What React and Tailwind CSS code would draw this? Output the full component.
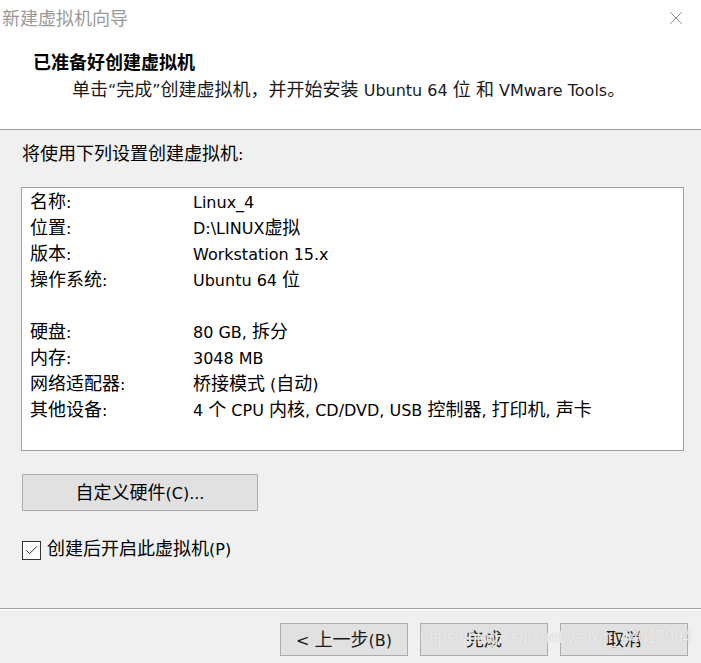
import { Check, X } from 'lucide-react';

const rows = [
  ['名称:', 'Linux_4'],
  ['位置:', 'D:\\LINUX虚拟'],
  ['版本:', 'Workstation 15.x'],
  ['操作系统:', 'Ubuntu 64 位'],
  null,
  ['硬盘:', '80 GB, 拆分'],
  ['内存:', '3048 MB'],
  ['网络适配器:', '桥接模式 (自动)'],
  ['其他设备:', '4 个 CPU 内核, CD/DVD, USB 控制器, 打印机, 声卡'],
];

const font = { fontFamily: '"DejaVu Sans", "Noto Sans CJK SC", sans-serif' };

// Han runs render a little larger than the Latin text beside them
function T({ children }) {
  const parts = String(children).split(/([\u3000-\u303f\u4e00-\u9fff\uff00-\uffef]+)/);
  return parts.map((p, i) =>
    i % 2 ? (
      <span key={i} className="text-[18px] leading-none">
        {p}
      </span>
    ) : (
      p
    )
  );
}

function DlgButton({ children }) {
  return (
    <button className="h-[33px] w-[128px] border border-[#adadad] bg-[#e1e1e1] text-[16px] leading-none text-[#1a1a1a]">
      <T>{children}</T>
    </button>
  );
}

export default function App() {
  return (
    <div className="relative h-[663px] w-[701px] overflow-hidden bg-[#f0f0f0] text-[16px] text-black" style={font}>
      {/* header */}
      <div className="h-[129px] bg-white">
        <div className="flex h-[36px] items-center justify-between pl-[2px] pr-[14px]">
          <span className="text-[18px] text-[#999999]">新建虚拟机向导</span>
          <X className="h-[22px] w-[22px] text-[#888888]" strokeWidth={1} />
        </div>
        <div className="pl-[33px] pt-[15px] text-[18px] font-bold leading-[24px]">已准备好创建虚拟机</div>
        <div className="pl-[72px] pt-[4px] leading-[24px] text-[#1a1a1a]">
          <T>单击“完成”创建虚拟机，并开始安装 Ubuntu 64 位 和 VMware Tools。</T>
        </div>
      </div>
      <div className="h-px bg-[#a0a0a0]" />

      <div className="px-[21px]">
        <div className="pl-px pt-[13px] leading-[24px]">
          <T>将使用下列设置创建虚拟机:</T>
        </div>
        <div className="mt-[20px] h-[264px] w-[663px] border border-[#a0a0a0] bg-white pl-[8px] pt-[2px]">
          {rows.map((r, i) =>
            r ? (
              <div key={i} className="flex h-[26px] items-center">
                <span className="w-[163px] shrink-0">
                  <T>{r[0]}</T>
                </span>
                <span>
                  <T>{r[1]}</T>
                </span>
              </div>
            ) : (
              <div key={i} className="h-[26px]" />
            )
          )}
        </div>

        <button className="ml-px mt-[23px] h-[37px] w-[236px] border border-[#adadad] bg-[#e1e1e1] leading-none">
          <T>自定义硬件(C)...</T>
        </button>

        <label className="ml-px mt-[27px] flex items-center gap-[6px]">
          <span className="flex h-[19px] w-[19px] items-center justify-center border border-[#333333] bg-white">
            <Check className="h-[15px] w-[15px] text-[#222222]" strokeWidth={1.5} />
          </span>
          <span className="leading-[24px]">
            <T>创建后开启此虚拟机(P)</T>
          </span>
        </label>
      </div>

      {/* footer */}
      <div className="mt-[46px] h-px bg-[#a0a0a0]" />
      <div className="h-px bg-white" />
      <div className="flex justify-end gap-[12px] pr-[13px] pt-[13px]">
        <DlgButton>&lt; 上一步(B)</DlgButton>
        <DlgButton>完成</DlgButton>
        <DlgButton>取消</DlgButton>
      </div>

      {/* blog watermark */}
      <div
        className="pointer-events-none absolute left-[420px] top-[627px] origin-left scale-x-[0.84] whitespace-nowrap text-[19px] leading-none text-[#f7f7f7]/80"
        style={{ fontFamily: '"Liberation Sans", sans-serif', textShadow: '0 0 1px #bdbdbd' }}
      >
        https://blog.csdn.net/weixin_44017994
      </div>
    </div>
  );
}
